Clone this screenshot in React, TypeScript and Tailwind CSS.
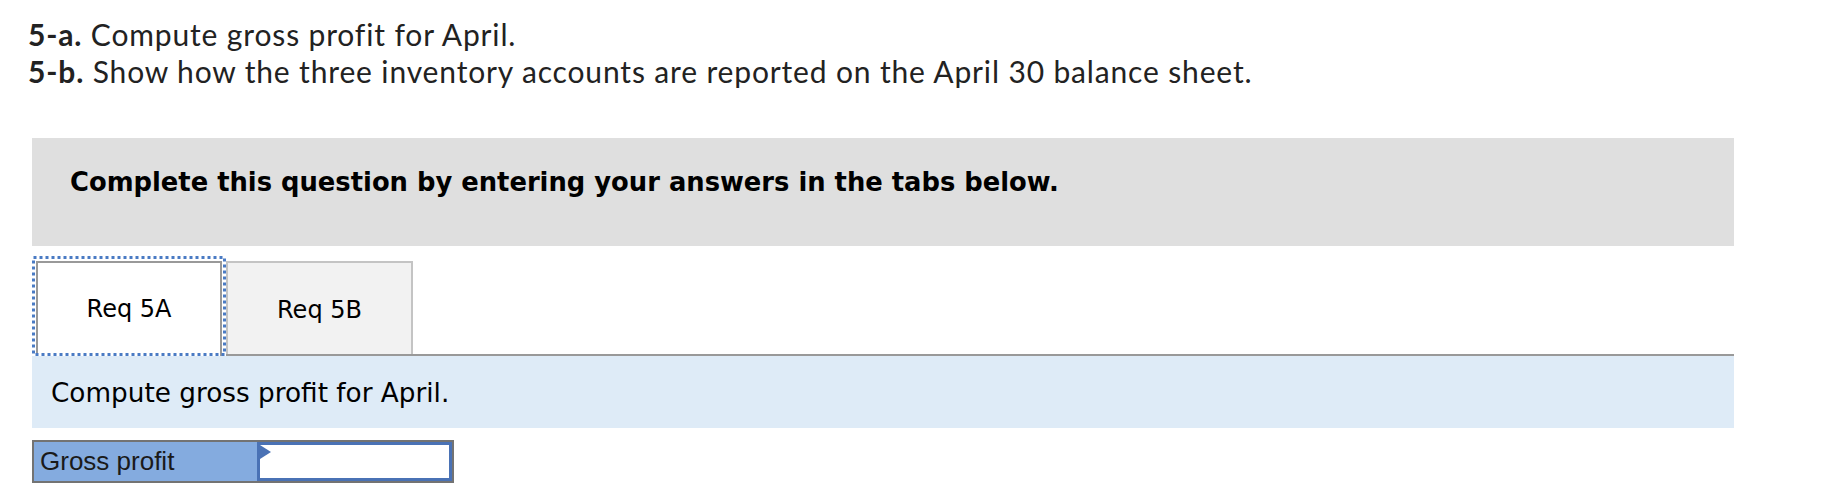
import React from "react";

export default function App() {
  return (
    <div className="w-[1831px] h-[500px] bg-white overflow-hidden">
      <div className="pl-[28px] pt-[16px] text-[30px] leading-[37px] tracking-[0.85px] text-[#222] font-['Lato',sans-serif]">
        <p>
          <span className="font-bold">5-a.</span> Compute gross profit for April.
        </p>
        <p>
          <span className="font-bold">5-b.</span> Show how the three inventory accounts are reported on the April 30 balance sheet.
        </p>
      </div>

      <div className="ml-[32px] w-[1702px] mt-[48px]">
        <div className="h-[108px] bg-[#dfdfdf] pl-[38px] pt-[27px]">
          <p className="font-['DejaVu_Sans',sans-serif] font-bold text-[25.8px] leading-[34px] text-black">
            Complete this question by entering your answers in the tabs below.
          </p>
        </div>

        <div className="mt-[10px] flex items-end border-b-2 border-[#999] h-[100px]">
          <div className="relative z-10 -mb-[2px] h-[100px] w-[194px] bg-white pl-[4px] pr-[4px] pt-[5px]">
            <svg className="absolute inset-0" width="194" height="100" viewBox="0 0 194 100">
              <rect x="1.5" y="1.5" width="191" height="97" fill="none" stroke="#4a7bc4" strokeWidth="3" strokeDasharray="3 3" />
            </svg>
            <div className="h-full border-2 border-b-0 border-[#999] bg-white flex items-center justify-center pb-[2px]">
              <span className="font-['DejaVu_Sans',sans-serif] text-[24px] text-black">Req 5A</span>
            </div>
          </div>
          <div className="h-[93px] w-[187px] border-2 border-b-0 border-[#c4c4c4] bg-[#f2f2f2] flex items-center justify-center pt-[2px]">
            <span className="font-['DejaVu_Sans',sans-serif] text-[24px] text-black">Req 5B</span>
          </div>
        </div>

        <div className="h-[72px] bg-[#deebf7] pl-[19px] pt-[3px] flex items-center">
          <span className="font-['DejaVu_Sans',sans-serif] text-[26.3px] text-black">Compute gross profit for April.</span>
        </div>

        <div className="mt-[12px] flex w-[422px] h-[43px] border-2 border-[#737373]">
          <div className="w-[223px] h-full bg-[#84abdf] pl-[6px] flex items-center">
            <span className="font-['Liberation_Sans',Arial,sans-serif] text-[26px] text-[#1a1a1a]">Gross profit</span>
          </div>
          <div className="relative flex-1 h-full border-[3px] border-[#4a72b5] bg-white">
            <svg className="absolute left-0 top-0" width="12" height="15" viewBox="0 0 12 15">
              <polygon points="0,0 11,7 0,14" fill="#4a72b5" />
            </svg>
          </div>
        </div>
      </div>
    </div>
  );
}
